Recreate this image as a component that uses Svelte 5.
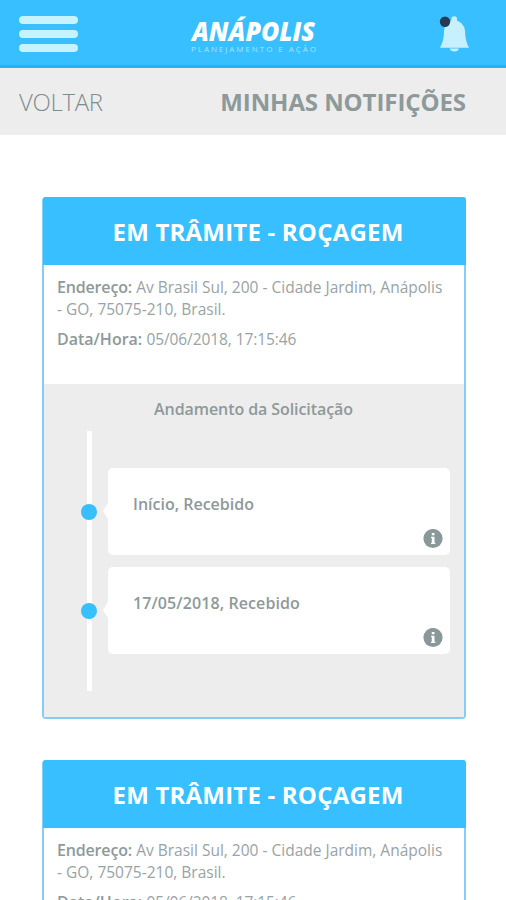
<script>
  const cards = [1, 2].map((id) => ({
    id,
    title: 'EM TRÂMITE - ROÇAGEM',
    address: ['Av Brasil Sul, 200 - Cidade Jardim, Anápolis', '- GO, 75075-210, Brasil.'],
    date: '05/06/2018, 17:15:46',
    steps: ['Início, Recebido', '17/05/2018, Recebido']
  }));
</script>

<div class="screen">
  <header>
    <button class="menu" aria-label="Menu"><i></i><i></i><i></i></button>
    <div class="logo">
      <svg width="128" height="42" viewBox="0 0 128 42">
        <text class="brand" x="2" y="26.500" textLength="123" lengthAdjust="spacingAndGlyphs">ANÁPOLIS</text>
        <text class="tag" x="1" y="37.500" textLength="125" lengthAdjust="spacing">PLANEJAMENTO E AÇÃO</text>
      </svg>
    </div>
    <svg class="bell" width="32" height="38" viewBox="0 0 32 38">
      <path fill="#c7f0ff" d="M13.300 3.200a2.900 2.900 0 0 1 5.800 0v1.600c5 2 7.600 5.500 8 10.700.3 6.500 1 10.500 4 16.200H2c3-5.700 3.700-9.700 4-16.200C6.400 10.300 8.600 6.800 13.300 4.800zM11.700 32.600h9.200c-.5 1.900-2 2.900-4.500 2.900s-4.200-1-4.700-2.900z" />
      <circle cx="7" cy="5.700" r="5.200" fill="#263b52" />
    </svg>
  </header>

  <nav>
    <span class="back">VOLTAR</span>
    <h1>MINHAS NOTIFIÇÕES</h1>
  </nav>

  <main>
    {#each cards as card (card.id)}
      <article>
        <h2>{card.title}</h2>
        <section class="info">
          <p><b>Endereço:</b> <span class="address">{card.address[0]}</span><br /><span class="address">{card.address[1]}</span></p>
          <p><b class="when">Data/Hora:</b> <span class="date">{card.date}</span></p>
        </section>
        <section class="progress">
          <h3>Andamento da Solicitação</h3>
          <ol>
            {#each card.steps as step}
              <li>
                <span class="dot"></span>
                <div class="step">
                  <strong>{step}</strong>
                  <svg class="about" width="20" height="20" viewBox="0 0 20 20">
                    <circle cx="10" cy="9.500" r="9.600" fill="#8b9899" />
                    <path fill="#fff" d="M8.800 4h2.700v2.300H8.800zM8 7.700h3.500v6h.8v1.300H8v-1.300h.8V9H8z" />
                  </svg>
                </div>
              </li>
            {/each}
          </ol>
        </section>
      </article>
    {/each}
  </main>
</div>

<style>
  :global(body) { margin: 0; background: #fff; }
  * { box-sizing: border-box; }
  .screen {
    width: 506px; height: 900px; overflow: hidden; background: #fff;
    font-family: "Open Sans", "Noto Sans", sans-serif; color: #8d999a;
  }
  header {
    height: 68px; background: #37bfff; border-bottom: 3px solid #20b3f5;
    display: flex; align-items: flex-start; justify-content: space-between;
    padding: 16px 36px 0 19px;
  }
  .menu {
    width: 59px; padding: 0; border: 0; background: none;
    display: flex; flex-direction: column; gap: 6px;
  }
  .menu i { height: 8px; width: 59px; border-radius: 4px; background: #c7f3ff; }
  .logo { height: 42px; margin-right: 9px; margin-top: -2px; }
  .logo svg { display: block; overflow: visible; }
  .brand { font: italic 800 27px "Open Sans", sans-serif; fill: #fff; }
  .tag { font: 8px "Open Sans", sans-serif; fill: #a9e2ff; }
  nav {
    height: 67px; background: #ededed; padding: 0 40px 0 19px;
    display: flex; align-items: center; justify-content: space-between;
  }
  .back { font-size: 24px; font-weight: 300; letter-spacing: -0.35px; color: #7f8c8d; }
  h1, h2, h3, p, ol { margin: 0; padding: 0; }
  h1 { font-size: 24px; font-weight: 700; letter-spacing: -0.08px; }
  main { padding: 62px 40px 0 42px; display: flex; flex-direction: column; gap: 41px; }
  article { height: 522px; border: 2px solid #84cdfa; border-radius: 4px; background: #fff; flex: none; }
  h2 {
    margin: -2px -2px 0 -1px; height: 68px; background: #37bfff; border-radius: 3px 3px 0 0;
    color: #fff; font-size: 24px; font-weight: 700; line-height: 69px; text-align: center;
    letter-spacing: 0.2px; padding-left: 7px;
  }
  .info { height: 119px; padding: 11px 12px 0 13px; font-size: 16px; line-height: 22px; white-space: nowrap; }
  .info p + p { margin-top: 8px; }
  .info b { font-weight: 600; letter-spacing: -0.17px; }
  .info .when { letter-spacing: 0; }
  .address, .date { font-size: 15.500px; color: #99a3a5; }
  .date { letter-spacing: -0.08px; }
  .progress { height: 333px; background: #ededed; text-align: center; padding-top: 14px; }
  h3 { font-size: 16px; line-height: 22px; font-weight: 600; letter-spacing: -0.08px; padding-right: 1px; }
  ol {
    list-style: none; margin: 11px 14px 0 42px; height: 260px; padding-top: 37px;
    background: linear-gradient(#fff, #fff) 1px 0 / 5px 100% no-repeat;
    display: flex; flex-direction: column; gap: 12px;
  }
  li { display: flex; align-items: center; height: 87px; }
  .dot { width: 16px; height: 16px; border-radius: 50%; background: #37bfff; margin-left: -5px; flex: none; }
  .step {
    position: relative; margin-left: 11px; flex: 1; height: 87px; background: #fff; border-radius: 5px;
    display: flex; justify-content: space-between; padding: 25px 7px 6px 25px; text-align: left;
  }
  .step::before {
    content: ""; position: absolute; left: -5px; top: 35px;
    border: 8px solid transparent; border-left: 0; border-right: 5px solid #fff;
  }
  .step strong { font-size: 16px; line-height: 22px; font-weight: 600; }
  li + li strong { letter-spacing: 0.1px; }
  .about { align-self: flex-end; }
</style>
